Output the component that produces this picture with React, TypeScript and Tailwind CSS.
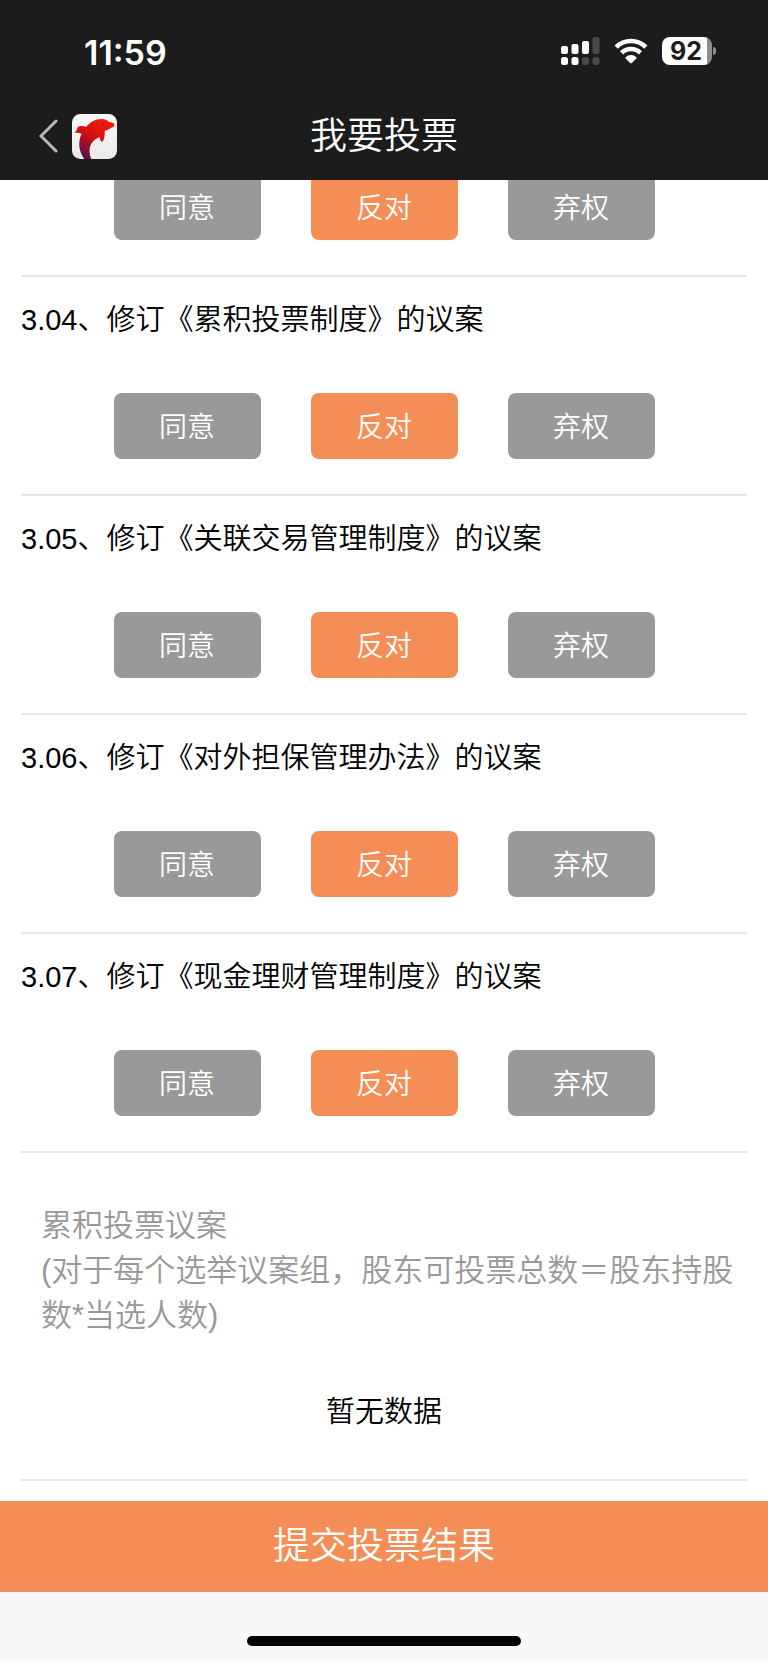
import { useState } from "react";

const proposals = [
  { id: "3.04", title: "修订《累积投票制度》的议案" },
  { id: "3.05", title: "修订《关联交易管理制度》的议案" },
  { id: "3.06", title: "修订《对外担保管理办法》的议案" },
  { id: "3.07", title: "修订《现金理财管理制度》的议案" },
];

const options = ["同意", "反对", "弃权"];

const SignalIcon = () => (
  <svg width="39" height="28" viewBox="0 0 39 28" fill="#fff" aria-hidden="true">
    <rect x="0" y="9" width="7" height="8" rx="2" />
    <rect x="10.5" y="7" width="7" height="10" rx="2" />
    <rect x="21" y="4" width="7" height="13" rx="2" />
    <rect x="31.5" y="0" width="7" height="17" rx="2" fill="#4a4a4a" />
    <rect x="0" y="20" width="7" height="8" rx="2.5" />
    <rect x="10.5" y="20" width="7" height="8" rx="2.5" />
    <rect x="21" y="20" width="7" height="8" rx="2.5" fill="#4a4a4a" />
    <rect x="31.5" y="20" width="7" height="8" rx="2.5" fill="#4a4a4a" />
  </svg>
);

const WifiIcon = () => (
  <svg width="34" height="26" viewBox="0 0 34 26" aria-hidden="true">
    <g fill="none" stroke="#fff" strokeWidth="4.6">
      <path d="M2.2 9.1a21 21 0 0 1 29.6 0" />
      <path d="M7.6 14.8a13.4 13.4 0 0 1 18.8 0" />
    </g>
    <path
      d="M11.6 19.2a7.8 7.8 0 0 1 10.8 0c.4.4.4.8 0 1.2l-4.6 4.7c-.5.5-1.1.5-1.6 0l-4.6-4.7c-.4-.4-.4-.8 0-1.2z"
      fill="#fff"
    />
  </svg>
);

const Battery = () => (
  <div className="flex items-center gap-px">
    <div className="flex h-7 w-[50px] items-center justify-center rounded-lg bg-linear-to-r from-white from-90% to-[#8e8e8e] to-90% pt-0.5 pr-0.5 text-[25px] font-bold text-[#1c1c1c]">
      92
    </div>
    <div className="h-2 w-[3px] rounded-r-full bg-[#8e8e8e]" />
  </div>
);

const DolphinLogo = () => (
  <svg width="45" height="45" viewBox="0 0 135 135" aria-hidden="true">
    <defs>
      <linearGradient id="body" x1="0.75" y1="0.1" x2="0.3" y2="1">
        <stop offset="0" stopColor="#f21a0c" />
        <stop offset="0.4" stopColor="#d60f12" />
        <stop offset="0.75" stopColor="#8a0f35" />
        <stop offset="1" stopColor="#4c1050" />
      </linearGradient>
      <linearGradient id="tile" x1="0" y1="0" x2="0" y2="1">
        <stop offset="0" stopColor="#fafafa" />
        <stop offset="1" stopColor="#e9e9ea" />
      </linearGradient>
    </defs>
    <rect width="135" height="135" rx="25" fill="url(#tile)" />
    <path
      d="M7 57C13 51 16 44 18 38C25 35 34 36 43 38C54 25 70 15 88 15C99 15 106 18 111 24C117 25 123 25 127 29C129 35 125 39 118 41C112 45 106 47 98 51C99 57 98 65 97 71C95 77 92 81 90 85C86 81 84 76 83 69C65 76 54 91 53 106C52 117 54 127 58 135H37C23 116 18 92 25 69L29 59C22 56 14 56 7 57Z"
      fill="url(#body)"
    />
    <circle cx="93" cy="31" r="4" fill="#6d4a4a" />
    <circle cx="93" cy="31" r="2" fill="#222" />
  </svg>
);

const VoteButtons = ({ label }: { label: string }) => {
  const [selected, setSelected] = useState("反对");

  return (
    <div role="group" aria-label={label} className="flex shrink-0 justify-center gap-[50px]">
      {options.map((option) => (
        <button
          key={option}
          type="button"
          aria-pressed={selected === option}
          onClick={() => setSelected(option)}
          className={`h-[66px] w-[147px] rounded-lg pt-[3px] text-[28px] text-white ${
            selected === option ? "bg-[#f48e56]" : "bg-[#999999]"
          }`}
        >
          {option}
        </button>
      ))}
    </div>
  );
};

const App = () => {
  return (
    <div className="min-h-screen bg-white font-['Liberation_Sans','Noto_Sans_CJK_SC',sans-serif] font-[350] text-black">
      <header className="bg-[#1c1c1c] text-white">
        <div className="flex h-[92px] items-center justify-between pt-[10px] pr-[52px] pl-[84px] font-['Inter',sans-serif]">
          <span className="pt-0.5 text-[34px] font-semibold">11:59</span>
          <div className="flex items-center gap-[14px]">
            <SignalIcon />
            <WifiIcon />
            <Battery />
          </div>
        </div>
        <div className="grid h-[88px] grid-cols-[1fr_auto_1fr] items-center px-[39px]">
          <a href="#" aria-label="返回" className="flex items-center gap-[14px]">
            <svg width="19" height="34" viewBox="0 0 19 34" fill="none" stroke="#b8b8b8" strokeWidth="3" strokeLinecap="round" aria-hidden="true">
              <path d="M17 2L2 17l15 15" />
            </svg>
            <DolphinLogo />
          </a>
          <h1 className="pt-0.5 text-[37px] font-[350]">我要投票</h1>
        </div>
      </header>

      <main className="px-[21px]">
        {/* previous proposal, scrolled partly under the header */}
        <section className="border-b-2 border-[#e6e6e6] pb-[35px]">
          <div className="flex h-[60px] flex-col justify-end overflow-hidden">
            <VoteButtons label="3.03" />
          </div>
        </section>

        {proposals.map((item) => (
          <section key={item.id} className="border-b-2 border-[#e6e6e6] pt-[21px] pb-[35px]">
            <h2 className="mb-[51px] text-[29px] leading-[44px] font-[350]">
              {item.id}、{item.title}
            </h2>
            <VoteButtons label={item.id} />
          </section>
        ))}

        <section className="border-b-2 border-[#e6e6e6] pt-[50px] pb-[45px]">
          <p className="pl-5 text-[31px] leading-[45px] text-[#999999]">
            累积投票议案
            <br />
            (对于每个选举议案组，股东可投票总数＝股东持股数*当选人数)
          </p>
          <p className="mt-[52px] text-center text-[29px] leading-[44px]">暂无数据</p>
        </section>
      </main>

      <footer className="mt-5 bg-[#f7f8fa]">
        <button type="button" className="h-[91px] w-full bg-[#f48e56] text-[37px] text-white">
          提交投票结果
        </button>
        <div className="flex h-[70px] items-end justify-center pb-4">
          <div className="h-[10px] w-[274px] rounded-full bg-black" />
        </div>
      </footer>
    </div>
  );
};

export default App;
